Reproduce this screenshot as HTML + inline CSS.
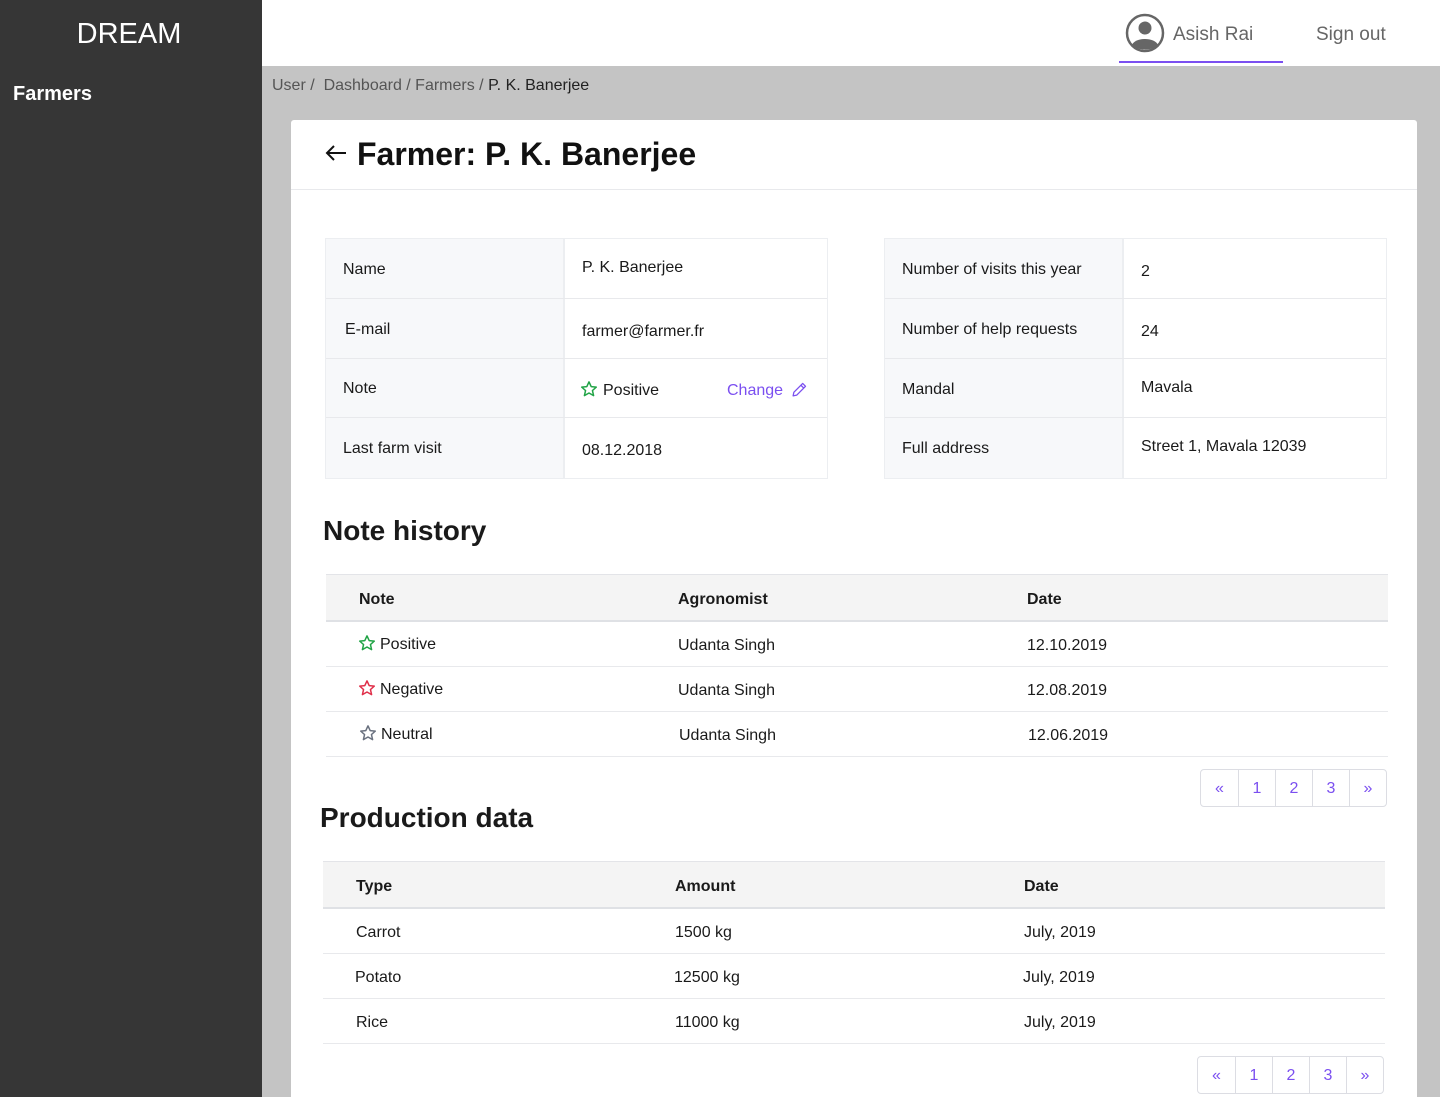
<!DOCTYPE html>
<html style="width:1440px;height:1097px;overflow:hidden"><head><meta charset="utf-8"><style>
*{margin:0;padding:0;box-sizing:border-box}
body{width:1440px;height:1097px;overflow:hidden;background:#c4c4c4;font-family:"Liberation Sans",sans-serif;color:#1a1a1a;position:relative}
.a{position:absolute;white-space:nowrap}
.t{position:absolute;white-space:nowrap;font-size:16px;line-height:20px;transform:translateY(2px)}
.side{left:0;top:0;width:262px;height:1097px;background:#363636}
.hdr{left:262px;top:0;width:1178px;height:66px;background:#fff}
.card{left:291px;top:120px;width:1126px;height:977px;background:#fff;border-radius:3px 3px 0 0}
.lbl{background:#f7f8fa}
.line{position:absolute;height:1px;background:#e8e9ec}
.th{position:absolute;background:#f4f4f4;border-top:1px solid #e3e4e8;border-bottom:2px solid #dfe1e5}
.b{font-weight:bold}
.pg{position:absolute;display:flex;border:1px solid #dcdde3;border-radius:4px;height:38px}
.pg div{width:37px;border-left:1px solid #dcdde3;color:#7b4ff0;font-size:16px;display:flex;align-items:center;justify-content:center;padding-top:2px}
.pg div:first-child{border-left:none}
</style></head><body>
<div class="a side"></div>
<div class="a" style="left:0;width:258px;top:16px;text-align:center;color:#fff;font-size:29px;line-height:36px">DREAM</div>
<div class="a b" style="left:13px;top:82px;color:#fff;font-size:20px;line-height:24px">Farmers</div>
<div class="a hdr"></div>
<svg class="a" style="left:1125px;top:13px" width="40" height="40" viewBox="0 0 40 40"><circle cx="20" cy="20" r="18" fill="none" stroke="#666" stroke-width="2.5"/><circle cx="20" cy="15" r="6.5" fill="#666"/><path d="M7 32 C10 24 30 24 33 32 C28 38 12 38 7 32Z" fill="#666"/></svg>
<div class="a" style="left:1173px;top:23px;font-size:19px;line-height:24px;color:#666">Asish Rai</div>
<div class="a" style="left:1119px;top:61px;width:164px;height:2px;background:#7b4ff0"></div>
<div class="a" style="left:1316px;top:23px;font-size:19px;line-height:24px;color:#666">Sign out</div>
<div class="a" style="left:272px;top:76px;font-size:16px;line-height:20px;color:#555">User / &nbsp;Dashboard / Farmers / <span style="color:#222">P. K. Banerjee</span></div>
<div class="a card"></div>
<svg class="a" style="left:324px;top:144px" width="24" height="18" viewBox="0 0 24 18"><path d="M22 9H3 M10 2L3 9l7 7" fill="none" stroke="#111" stroke-width="2"/></svg>
<div class="a b" style="left:357px;top:135px;font-size:32px;line-height:38px;color:#111">Farmer: P. K. Banerjee</div>
<div class="line" style="left:291px;top:189px;width:1126px"></div>

<div class="a" style="left:325px;top:238px;width:503px;height:241px;border:1px solid #eceef1"></div>
<div class="a lbl" style="left:326px;top:239px;width:239px;height:239px;border-right:2px solid #eceef1"></div>
<div class="line" style="left:326px;top:298px;width:501px"></div>
<div class="line" style="left:326px;top:358px;width:501px"></div>
<div class="line" style="left:326px;top:417px;width:501px"></div>
<div class="t" style="left:343px;top:258px">Name</div>
<div class="t" style="left:582px;top:256px">P. K. Banerjee</div>
<div class="t" style="left:345px;top:318px">E-mail</div>
<div class="t" style="left:582px;top:320px">farmer@farmer.fr</div>
<div class="t" style="left:343px;top:377px">Note</div>
<svg class="a" style="left:580px;top:380px" width="18" height="18" viewBox="0 0 24 24"><path d="M12 2.5l2.9 6.3 6.8.7-5.1 4.6 1.5 6.7L12 17.3l-6.1 3.5 1.5-6.7-5.1-4.6 6.8-.7z" fill="none" stroke="#22a447" stroke-width="2" stroke-linejoin="round"/></svg>
<div class="t" style="left:603px;top:379px">Positive</div>
<div class="t" style="left:727px;top:379px;color:#7b4ff0">Change</div>
<svg class="a" style="left:791px;top:381px" width="17" height="17" viewBox="0 0 24 24"><path d="M16.5 3.5l4 4L8 20l-5 1 1-5z M14 6l4 4" fill="none" stroke="#7b4ff0" stroke-width="1.8" stroke-linejoin="round"/></svg>
<div class="t" style="left:343px;top:437px">Last farm visit</div>
<div class="t" style="left:582px;top:439px">08.12.2018</div>

<div class="a" style="left:884px;top:238px;width:503px;height:241px;border:1px solid #eceef1"></div>
<div class="a lbl" style="left:885px;top:239px;width:239px;height:239px;border-right:2px solid #eceef1"></div>
<div class="line" style="left:885px;top:298px;width:501px"></div>
<div class="line" style="left:885px;top:358px;width:501px"></div>
<div class="line" style="left:885px;top:417px;width:501px"></div>
<div class="t" style="left:902px;top:258px">Number of visits this year</div>
<div class="t" style="left:1141px;top:260px">2</div>
<div class="t" style="left:902px;top:318px">Number of help requests</div>
<div class="t" style="left:1141px;top:320px">24</div>
<div class="t" style="left:902px;top:378px">Mandal</div>
<div class="t" style="left:1141px;top:376px">Mavala</div>
<div class="t" style="left:902px;top:437px">Full address</div>
<div class="t" style="left:1141px;top:435px">Street 1, Mavala 12039</div>

<div class="a b" style="left:323px;top:514px;font-size:28px;line-height:34px">Note history</div>
<div class="th" style="left:326px;top:574px;width:1062px;height:48px"></div>
<div class="t b" style="left:359px;top:588px">Note</div>
<div class="t b" style="left:678px;top:588px">Agronomist</div>
<div class="t b" style="left:1027px;top:588px">Date</div>
<svg class="a" style="left:358px;top:634px" width="18" height="18" viewBox="0 0 24 24"><path d="M12 2.5l2.9 6.3 6.8.7-5.1 4.6 1.5 6.7L12 17.3l-6.1 3.5 1.5-6.7-5.1-4.6 6.8-.7z" fill="none" stroke="#22a447" stroke-width="2" stroke-linejoin="round"/></svg>
<div class="t" style="left:380px;top:633px">Positive</div>
<div class="t" style="left:678px;top:634px">Udanta Singh</div>
<div class="t" style="left:1027px;top:634px">12.10.2019</div>
<div class="line" style="left:326px;top:666px;width:1062px"></div>
<svg class="a" style="left:358px;top:679px" width="18" height="18" viewBox="0 0 24 24"><path d="M12 2.5l2.9 6.3 6.8.7-5.1 4.6 1.5 6.7L12 17.3l-6.1 3.5 1.5-6.7-5.1-4.6 6.8-.7z" fill="none" stroke="#e0304a" stroke-width="2" stroke-linejoin="round"/></svg>
<div class="t" style="left:380px;top:678px">Negative</div>
<div class="t" style="left:678px;top:679px">Udanta Singh</div>
<div class="t" style="left:1027px;top:679px">12.08.2019</div>
<div class="line" style="left:326px;top:711px;width:1062px"></div>
<svg class="a" style="left:359px;top:724px" width="18" height="18" viewBox="0 0 24 24"><path d="M12 2.5l2.9 6.3 6.8.7-5.1 4.6 1.5 6.7L12 17.3l-6.1 3.5 1.5-6.7-5.1-4.6 6.8-.7z" fill="none" stroke="#6b7280" stroke-width="2" stroke-linejoin="round"/></svg>
<div class="t" style="left:381px;top:723px">Neutral</div>
<div class="t" style="left:679px;top:724px">Udanta Singh</div>
<div class="t" style="left:1028px;top:724px">12.06.2019</div>
<div class="line" style="left:326px;top:756px;width:1062px"></div>
<div class="pg" style="left:1200px;top:769px"><div>«</div><div>1</div><div>2</div><div>3</div><div>»</div></div>

<div class="a b" style="left:320px;top:801px;font-size:28px;line-height:34px">Production data</div>
<div class="th" style="left:323px;top:861px;width:1062px;height:48px"></div>
<div class="t b" style="left:356px;top:875px">Type</div>
<div class="t b" style="left:675px;top:875px">Amount</div>
<div class="t b" style="left:1024px;top:875px">Date</div>
<div class="t" style="left:356px;top:921px">Carrot</div>
<div class="t" style="left:675px;top:921px">1500 kg</div>
<div class="t" style="left:1024px;top:921px">July, 2019</div>
<div class="line" style="left:323px;top:953px;width:1062px"></div>
<div class="t" style="left:355px;top:966px">Potato</div>
<div class="t" style="left:674px;top:966px">12500 kg</div>
<div class="t" style="left:1023px;top:966px">July, 2019</div>
<div class="line" style="left:323px;top:998px;width:1062px"></div>
<div class="t" style="left:356px;top:1011px">Rice</div>
<div class="t" style="left:675px;top:1011px">11000 kg</div>
<div class="t" style="left:1024px;top:1011px">July, 2019</div>
<div class="line" style="left:323px;top:1043px;width:1062px"></div>
<div class="pg" style="left:1197px;top:1056px"><div>«</div><div>1</div><div>2</div><div>3</div><div>»</div></div>
</body></html>
